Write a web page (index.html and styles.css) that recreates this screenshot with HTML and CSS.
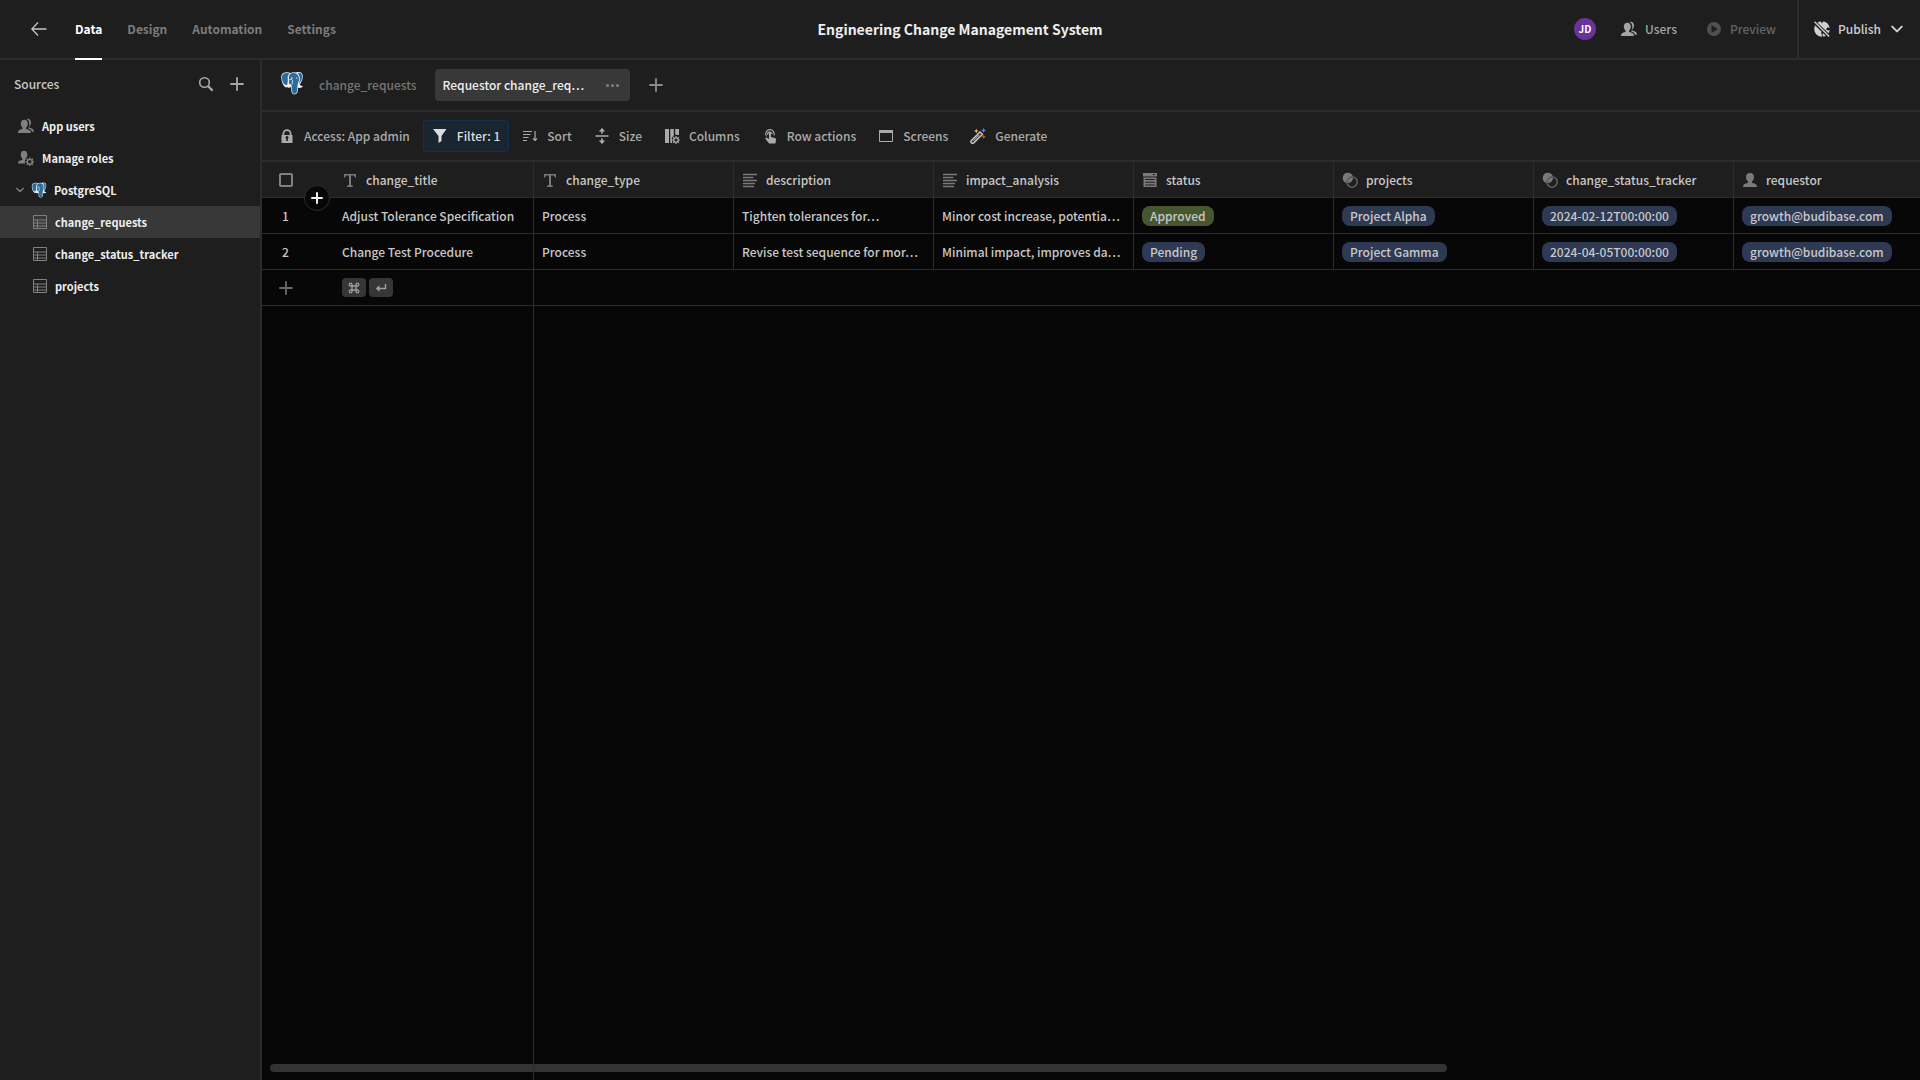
FILE: index.html
```
<!DOCTYPE html>
<html lang="en">
<head>
<meta charset="utf-8">
<title>Engineering Change Management System</title>
<link rel="stylesheet" href="styles.css">
</head>
<body>
<svg class="sprite" aria-hidden="true">
  <symbol id="i-back" viewBox="0 0 16 16"><path d="M15.500 8H1M7 1.500L.8 8L7 14.500" fill="none" stroke="currentColor" stroke-width="1.300"/></symbol>
  <symbol id="i-search" viewBox="0 0 16 16"><circle cx="6.500" cy="6.500" r="4.800" fill="none" stroke="currentColor" stroke-width="1.600"/><path d="M10 10l4.600 4.600" stroke="currentColor" stroke-width="2.200"/></symbol>
  <symbol id="i-plus" viewBox="0 0 16 16"><path d="M8 2v12M2 8h12" stroke="currentColor" stroke-width="1.800" stroke-linecap="round"/></symbol>
  <symbol id="i-plus-small" viewBox="0 0 16 16"><path d="M8 3v10M3 8h10" stroke="currentColor" stroke-width="2" stroke-linecap="round"/></symbol>
  <symbol id="i-user" viewBox="0 0 16 16"><path d="M1 15c0-2.800 1.700-3.500 4.600-4.100.6-.1.600-1.200.1-1.700C4.600 8.100 4 6.700 4 5c0-2.700 1.600-4 4-4s4 1.300 4 4c0 1.700-.6 3.100-1.700 4.200-.5.5-.5 1.600.1 1.700 2.900.6 4.600 1.300 4.600 4.100z" fill="currentColor"/></symbol>
  <symbol id="i-users" viewBox="0 0 16 16"><path d="M0 15c0-2.700 1.500-3.500 4.200-4 .6-.2.500-1.200 0-1.700C3.300 8.300 2.800 7 2.800 5.500 2.800 3 4.200 1.700 6.300 1.700S9.800 3 9.800 5.500c0 1.500-.5 2.800-1.400 3.800-.5.500-.6 1.500 0 1.700 2.700.5 4.600 1.300 4.600 4z" fill="currentColor"/><path d="M8.600 1.100c2.300-.9 4.400.8 4.400 3.300 0 1.700-.7 2.900-1.500 3.900-.4.500-.4 1.200.2 1.500 2.600.6 4.300 1.600 4.300 4h-1.900c-.4-1.900-1.700-2.900-3.900-3.400.7-1.200 1.100-2.900 1.100-4.900 0-1.900-.9-3.500-2.700-4.400z" fill="currentColor"/></symbol>
  <symbol id="i-roles" viewBox="0 0 16 16"><path d="M0 13.500c0-2.400 1.400-3.100 4.100-3.600.6-.2.500-1.100 0-1.600C3.200 7.300 2.700 6 2.700 4.600 2.700 2.300 4 .8 6 .8s3.300 1.500 3.300 3.800c0 1.400-.5 2.700-1.400 3.700-.3.400-.4.800-.3 1.200-.9 1.200-1 2.700-.4 4z" fill="currentColor"/><circle cx="11.800" cy="11.800" r="2.400" fill="none" stroke="currentColor" stroke-width="1.400"/><path d="M11.800 7.600v1.600M11.800 14.400V16M7.600 11.800h1.600M14.400 11.800H16M8.800 8.800l1.200 1.200M13.600 13.600l1.200 1.200M14.800 8.800l-1.200 1.200M10 13.600l-1.200 1.200" stroke="currentColor" stroke-width="1.400"/></symbol>
  <symbol id="i-chev" viewBox="0 0 10 10"><path d="M1 3l4 4 4-4" fill="none" stroke="currentColor" stroke-width="1.700" stroke-linecap="round" stroke-linejoin="round"/></symbol>
  <symbol id="i-pg" viewBox="0 0 24 24">
    <path d="M1.200 5.500C1.300 2.500 4 1 7.500 1.300c1 .1 1.800.3 2.700.7C12 1.200 14 1 16 1.400c3-1.200 6.500-.2 6.800 2.900.3 3-1 6.500-3 9.200.8 1.400 2 1.600 3.200 1.700-.9 1.600-3.300 2-5 1.500-.2 3.400-.2 6-2.900 6.600-2.700.5-3.600-1.300-3.800-3.700-.1-1.500-.1-2.500-.2-3.600-1.600 1.100-3.400.9-4.100.1C5 17.800 1 12 1.200 5.500z" fill="#e6eef3"/>
    <path d="M1.900 5.600c.1-2.700 2.500-3.900 5.500-3.600 1 .1 1.500.3 2 .5-2 1.700-1.800 4-1.600 6.200.1 2.400-.3 3.800-.9 5.300C4.300 14.800 1.700 10.500 1.900 5.600zM9.900 3.200C12 1.700 14.500 1.700 16.500 2.800c1.800 1.200 2.800 3.900 2.600 5.800-.3 2-1.200 3.500-1.500 5.500-.6 3.500.3 8-2.700 8.600-2.400.4-2.800-1.500-2.900-3.400-.1-2 .1-3.600-.7-5.200-.5-1-1.300-1.200-1.800-.8-.6-1-.5-1.800-.4-2.500.1-1.100 0-2-.1-3.200-.1-1.600-.1-3.200.9-4.400zM17.700 2.200c2.300-.5 4.300.2 4.500 2.400.2 2.500-.8 5.200-2.700 7.800-.4-.8 0-1.700.2-2.700.5-2.700.1-5.400-2-7.500z" fill="#2b6c98"/>
    <path d="M11 7.200c.8-.4 1.500-.3 2 .1M16 7.300c.6-.3 1-.3 1.500 0M9.500 8.500c2-.6 3.200.3 3 2-.1 1.200-.7 1.800-.3 3" stroke="#e6eef3" stroke-width=".9" fill="none"/>
  </symbol>
  <symbol id="i-table" viewBox="0 0 14 14"><path d="M.5.500h13v13H.500zM.5 5h13M.5 8h13M.5 11h13M4.500 5v8.500" fill="none" stroke="currentColor"/></symbol>
  <symbol id="i-play" viewBox="0 0 16 16"><path d="M8 1a7 7 0 1 0 0 14A7 7 0 0 0 8 1zM5.500 4.300l6.300 3.700-6.300 3.700z" fill="currentColor" fill-rule="evenodd"/></symbol>
  <symbol id="i-globe" viewBox="0 0 16 16"><circle cx="8" cy="8" r="7.800" fill="currentColor"/><path d="M6.500 0L8 2.500 9.200 0zM9 15.900l-.6-2.900 3.200-2-.4-2L9 8.600l-1.800 3 1 4.300zM16.200 7l-2.600-.8L12 8.400l1.800 1.200 2.300-.6z" fill="#1e1e1e"/><path d="M0 .8l15.400 15" stroke="#1e1e1e" stroke-width="3.600"/><path d="M.6.800l14.600 14.600" stroke="currentColor" stroke-width="1.400"/></symbol>
  <symbol id="i-lock" viewBox="0 0 16 16"><path d="M3.500 7V5.700a4.500 4.500 0 0 1 9 0V7h1v8h-11V7zM5.300 7h5.400V5.700a2.700 2.700 0 0 0-5.400 0zM7.200 13h1.600v-2.200a1.500 1.500 0 1 0-1.600 0z" fill="currentColor" fill-rule="evenodd"/></symbol>
  <symbol id="i-filter" viewBox="0 0 16 16"><path d="M1 1h13.500L9.500 8v5l-3 2V8z" fill="currentColor"/></symbol>
  <symbol id="i-sort" viewBox="0 0 16 16"><path d="M1 3.500h9M1 6.500h7.500M1 9.500h5.500M1 12.500h4M13 3v9.500M11 10.500l2 2 2-2" stroke="currentColor" stroke-width="1.200" fill="none"/></symbol>
  <symbol id="i-size" viewBox="0 0 16 16"><path d="M1.500 8h13M8 .8v4.700M8 10.500v4.700" stroke="currentColor" stroke-width="1.700"/><path d="M4.800 3.500L8 0l3.200 3.500zM4.800 12.500L8 16l3.200-3.500z" fill="currentColor"/></symbol>
  <symbol id="i-cols" viewBox="0 0 16 16"><path d="M1 1h4v14H1zM6.300 1h3.500v6.500l-2 2.500.4 5H6.300zM11.200 1h3.800v6l-3.800-.3z" fill="currentColor"/><circle cx="12" cy="12" r="2.200" fill="none" stroke="currentColor" stroke-width="1.300"/><path d="M12 8v1.600M12 14.400V16M8 12h1.600M14.400 12H16M9.200 9.200l1.100 1.100M13.700 13.700l1.100 1.100M14.800 9.200l-1.100 1.100M10.300 13.700l-1.100 1.100" stroke="currentColor" stroke-width="1.200"/></symbol>
  <symbol id="i-tap" viewBox="0 0 16 16"><path d="M4.500 8.500A4.300 4.300 0 1 1 12 7.500M5.600 6.700a2.300 2.300 0 1 1 4.600-.5" stroke="currentColor" stroke-width="1.200" fill="none"/><path d="M7 4.800c0-1.200 1.900-1.200 1.900 0V9l4 .9c.8.200 1.200.8 1.100 1.600L13.500 15.500H7.200C5.800 14 4.300 11.800 3 10.200c.7-.8 1.700-.7 2.500-.1L7 11z" fill="currentColor"/></symbol>
  <symbol id="i-screen" viewBox="0 0 16 16"><path d="M1.500 2.500h13v11h-13z" fill="none" stroke="currentColor"/><path d="M1 2h14v3H1z" fill="currentColor"/></symbol>
  <symbol id="i-wand" viewBox="0 0 16 16"><path d="M1.200 12.700L10 4l2.400 2.200-8.700 8.700c-1.500 1.200-3.800-.8-2.500-2.200z" fill="none" stroke="#c8c8c8" stroke-width="1.500"/><path d="M3.500 12.700l6-6" stroke="#c8c8c8"/><path d="M6.300.5l.7 1.800 1.800.7-1.800.7-.7 1.800-.7-1.800L3.800 3l1.800-.7z" fill="#d8b64a"/><path d="M13.600 0l.8 1.700 1.600.7-1.600.7-.8 1.700-.8-1.700-1.700-.7 1.700-.7z" fill="#6f86e8"/><path d="M13.700 6.500l.7 1.700 1.600.6-1.600.6-.7 1.700-.7-1.700-1.700-.6 1.700-.6z" fill="#e0503c"/></symbol>
  <symbol id="i-text" viewBox="0 0 16 16"><path d="M2 2h12v3.500h-1.200L12.300 3.500H9v9.700l1.800.3V15H5.200v-1.500L7 13.200V3.500H3.700L3.200 5.500H2z" fill="currentColor"/></symbol>
  <symbol id="i-lines" viewBox="0 0 16 16"><path d="M1 2.500h14M1 5.500h10.500M1 8.500h14M1 11.500h12M1 14.500h11" stroke="currentColor" stroke-width="1.500"/></symbol>
  <symbol id="i-options" viewBox="0 0 16 16"><path d="M1 1h14v3.500H1zM1.500 5.500h13V15h-13zM10.500 2l1.500 1.500L13.500 2zM3.200 7v1h9.600V7zM3.200 9.700v1h9.600v-1zM3.200 12.400v1h9.600v-1z" fill="currentColor" fill-rule="evenodd"/></symbol>
  <symbol id="i-link" viewBox="0 0 16 16"><circle cx="10" cy="10" r="5.200" fill="none" stroke="currentColor" stroke-width="1.100"/><path d="M6 .8a5.200 5.200 0 0 1 4.800 3.400A6.200 6.200 0 0 0 4.200 10.900 5.200 5.200 0 0 1 6 .8z" fill="currentColor"/><path d="M11 5.500a5.200 5.200 0 0 1-5.500 5.500A4.900 4.900 0 0 1 11 5.500z" fill="currentColor"/></symbol>
  <symbol id="i-cmd" viewBox="0 0 12 12"><path d="M4 4V2.700A1.400 1.400 0 1 0 2.700 4h6.600A1.400 1.400 0 1 0 8 2.700v6.600A1.400 1.400 0 1 0 9.300 8H2.700A1.400 1.400 0 1 0 4 9.300z" fill="none" stroke="currentColor" stroke-width="1.300"/></symbol>
  <symbol id="i-return" viewBox="0 0 12 12"><path d="M10.500 2v4.500H2" fill="none" stroke="currentColor" stroke-width="1.400"/><path d="M4.500 3.300v6.400L.8 6.500z" fill="currentColor"/></symbol>
</svg>

<div class="app">
  <header class="topbar">
    <a class="back" href="#" aria-label="Back"><svg class="ico"><use href="#i-back"/></svg></a>
    <nav class="topnav">
      <a class="topnav-link is-active" href="#">Data</a>
      <a class="topnav-link" href="#">Design</a>
      <a class="topnav-link" href="#">Automation</a>
      <a class="topnav-link" href="#">Settings</a>
    </nav>
    <h1 class="app-title">Engineering Change Management System</h1>
    <div class="actions">
      <span class="avatar">JD</span>
      <button class="action"><svg class="ico"><use href="#i-users"/></svg>Users</button>
      <button class="action preview" disabled><svg class="ico"><use href="#i-play"/></svg>Preview</button>
      <button class="action publish"><svg class="ico"><use href="#i-globe"/></svg>Publish<svg class="ico chevron"><use href="#i-chev"/></svg></button>
    </div>
  </header>

  <aside class="sidebar">
    <div class="sidebar-head">
      <h2 class="sidebar-title">Sources</h2>
      <button class="icon-btn" aria-label="Search"><svg class="ico"><use href="#i-search"/></svg></button>
      <button class="icon-btn" aria-label="Add source"><svg class="ico"><use href="#i-plus"/></svg></button>
    </div>
    <nav class="sources">
      <a class="source" href="#"><svg class="ico"><use href="#i-users"/></svg>App users</a>
      <a class="source" href="#"><svg class="ico"><use href="#i-roles"/></svg>Manage roles</a>
      <a class="source source-db" href="#"><svg class="ico twisty"><use href="#i-chev"/></svg><svg class="ico pg-small"><use href="#i-pg"/></svg>PostgreSQL</a>
      <a class="source source-table is-selected" href="#"><svg class="ico"><use href="#i-table"/></svg>change_requests</a>
      <a class="source source-table" href="#"><svg class="ico"><use href="#i-table"/></svg>change_status_tracker</a>
      <a class="source source-table" href="#"><svg class="ico"><use href="#i-table"/></svg>projects</a>
    </nav>
  </aside>

  <main class="content">
    <div class="tabs">
      <svg class="pg-logo"><use href="#i-pg"/></svg>
      <a class="tab" href="#">change_requests</a>
      <div class="tab is-active">
        <a class="tab-label" href="#">Requestor change_req…</a>
        <button class="more" aria-label="View options"><i></i><i></i><i></i></button>
      </div>
      <button class="icon-btn add-view" aria-label="Add view"><svg class="ico"><use href="#i-plus"/></svg></button>
    </div>

    <div class="toolbar">
      <button class="tool"><svg class="ico"><use href="#i-lock"/></svg>Access: App admin</button>
      <button class="tool is-on"><svg class="ico"><use href="#i-filter"/></svg>Filter: 1</button>
      <button class="tool"><svg class="ico"><use href="#i-sort"/></svg>Sort</button>
      <button class="tool"><svg class="ico"><use href="#i-size"/></svg>Size</button>
      <button class="tool"><svg class="ico"><use href="#i-cols"/></svg>Columns</button>
      <button class="tool"><svg class="ico"><use href="#i-tap"/></svg>Row actions</button>
      <button class="tool"><svg class="ico"><use href="#i-screen"/></svg>Screens</button>
      <button class="tool"><svg class="ico"><use href="#i-wand"/></svg>Generate</button>
    </div>

    <div class="grid">
      <table class="table">
        <colgroup>
          <col class="col-num"><col class="col"><col class="col"><col class="col"><col class="col"><col class="col"><col class="col"><col class="col"><col class="col">
        </colgroup>
        <thead>
          <tr>
            <th class="num"><input class="check" type="checkbox" aria-label="Select all rows"></th>
            <th><span class="head"><svg class="ico"><use href="#i-text"/></svg>change_title</span></th>
            <th><span class="head"><svg class="ico"><use href="#i-text"/></svg>change_type</span></th>
            <th><span class="head"><svg class="ico"><use href="#i-lines"/></svg>description</span></th>
            <th><span class="head"><svg class="ico"><use href="#i-lines"/></svg>impact_analysis</span></th>
            <th><span class="head"><svg class="ico"><use href="#i-options"/></svg>status</span></th>
            <th><span class="head"><svg class="ico"><use href="#i-link"/></svg>projects</span></th>
            <th><span class="head"><svg class="ico"><use href="#i-link"/></svg>change_status_tracker</span></th>
            <th><span class="head"><svg class="ico"><use href="#i-user"/></svg>requestor</span></th>
          </tr>
        </thead>
        <tbody>
          <tr>
            <td class="num">1</td>
            <td>Adjust Tolerance Specification</td>
            <td>Process</td>
            <td>Tighten tolerances for…</td>
            <td>Minor cost increase, potentia…</td>
            <td><span class="chip chip-green">Approved</span></td>
            <td><span class="chip">Project Alpha</span></td>
            <td><span class="chip">2024-02-12T00:00:00</span></td>
            <td><span class="chip">growth@budibase.com</span></td>
          </tr>
          <tr>
            <td class="num">2</td>
            <td>Change Test Procedure</td>
            <td>Process</td>
            <td>Revise test sequence for mor…</td>
            <td>Minimal impact, improves da…</td>
            <td><span class="chip">Pending</span></td>
            <td><span class="chip">Project Gamma</span></td>
            <td><span class="chip">2024-04-05T00:00:00</span></td>
            <td><span class="chip">growth@budibase.com</span></td>
          </tr>
          <tr class="new-row">
            <td class="num"><button class="icon-btn add-row" aria-label="Add row"><svg class="ico"><use href="#i-plus"/></svg></button></td>
            <td><span class="keys"><kbd><svg class="key-ico" role="img" aria-label="Command"><use href="#i-cmd"/></svg></kbd><kbd><svg class="key-ico" role="img" aria-label="Enter"><use href="#i-return"/></svg></kbd></span></td>
            <td colspan="7"></td>
          </tr>
        </tbody>
      </table>
      <div class="grid-rest"></div>
      <div class="scrollbar"></div>
      <button class="insert" aria-label="Insert row"><svg class="ico"><use href="#i-plus-small"/></svg></button>
    </div>
  </main>
</div>
</body>
</html>
```
FILE: styles.css
```
* { box-sizing: border-box; }

body {
  margin: 0;
  background: #1e1e1e;
  color: #c8c8c8;
  font: 500 12px/20px "Noto Sans CJK KR", "Noto Sans", sans-serif;
}

a { color: inherit; text-decoration: none; }
h1, h2 { margin: 0; }
button {
  display: flex;
  align-items: center;
  margin: 0;
  padding: 0;
  border: 0;
  background: none;
  color: inherit;
  font: inherit;
}

.sprite { position: absolute; width: 0; height: 0; }
.ico { display: block; flex: none; width: 16px; height: 16px; }

.app {
  display: grid;
  grid-template: 60px 1fr / 262px minmax(0, 1fr);
  height: 100vh;
}

/* Top bar */
.topbar {
  grid-column: 1 / -1;
  display: grid;
  grid-template: 60px / 75px 1fr auto 1fr 75px;
  border-bottom: 2px solid #2c2c2c;
}
.back { display: flex; align-items: center; height: 58px; padding-left: 31px; }
.topnav { display: flex; gap: 25px; }
.topnav-link { height: 60px; line-height: 58px; color: #7c7c7c; font-weight: 700; }
.topnav-link.is-active { color: #fff; border-bottom: 2px solid #fff; }
.app-title { font-size: 14px; line-height: 58px; color: #eee; }
.actions { grid-column: 4 / -1; display: flex; align-items: center; justify-content: flex-end; height: 58px; }
.avatar {
  width: 22px;
  height: 22px;
  margin-right: 25px;
  border-radius: 50%;
  background: #68349a;
  color: #fff;
  font-size: 10px;
  font-weight: 700;
  line-height: 22px;
  text-align: center;
}
.action { gap: 8px; color: #a4a4a4; }
.preview { margin-left: 29px; color: #646464; }
.preview .ico { color: #505050; }
.publish {
  align-self: stretch;
  margin-left: 21px;
  padding: 0 17px 0 15px;
  border-left: 2px solid #2c2c2c;
  color: #d0d0d0;
}
.chevron { width: 12px; height: 12px; margin-left: 2px; }

/* Sidebar */
.sidebar { border-right: 2px solid #2c2c2c; }
.sidebar-head { display: flex; align-items: center; gap: 15px; height: 50px; padding: 0 15px 2px 14px; }
.sidebar-title { flex: 1; font-size: 12px; font-weight: 500; }
.icon-btn { color: #a8a8a8; }
.source {
  display: flex;
  align-items: center;
  gap: 8px;
  height: 32px;
  padding-left: 18px;
  color: #eee;
  font-size: 11px;
  font-weight: 700;
}
.source .ico { color: #808080; }
.source-db { gap: 7px; padding-left: 16px; }
.source .twisty { width: 8px; height: 8px; }
.source-table { padding-left: 33px; }
.source-table .ico { width: 14px; height: 14px; }
.source.is-selected { background: #383838; }

/* View tabs */
.content { display: flex; flex-direction: column; min-width: 0; }
.tabs { display: flex; align-items: center; height: 52px; padding-left: 18px; border-bottom: 2px solid #2c2c2c; }
.pg-logo { width: 24px; height: 24px; margin-right: 7px; margin-bottom: 4px; }
.tab { display: flex; align-items: center; height: 32px; padding: 0 8px; color: #747474; }
.tab.is-active {
  justify-content: space-between;
  width: 195px;
  margin: 0 18px 0 10px;
  padding-right: 11px;
  border-radius: 4px;
  background: #383838;
  color: #eee;
}
.more { gap: 2px; }
.more i { width: 3px; height: 3px; border-radius: 50%; background: #808080; }
.add-view { color: #8c8c8c; }

/* Toolbar */
.toolbar { display: flex; align-items: center; gap: 4px; height: 50px; padding-left: 8px; border-bottom: 2px solid #2c2c2c; }
.tool { gap: 9px; height: 32px; padding: 0 9px; border-radius: 4px; color: #aaa; }
.tool.is-on { background: #192531; box-shadow: inset 0 0 0 1px #14304e; color: #ddd; }

/* Data grid */
.grid { position: relative; flex: 1; display: flex; flex-direction: column; overflow: hidden; background: #070707; }
.table { width: 1672px; table-layout: fixed; border-collapse: separate; border-spacing: 0; }
.col-num { width: 72px; }
.col { width: 200px; }
th, td {
  height: 36px;
  padding: 0 8px;
  border-right: 1px solid #2c2c2c;
  border-bottom: 1px solid #2c2c2c;
  overflow: hidden;
  font-weight: 500;
  text-align: left;
  white-space: nowrap;
}
th { background: #1e1e1e; }
.num { padding: 0 25px 0 0; border-right: 0; text-align: center; }
.head { display: flex; align-items: center; gap: 8px; }
.head .ico { color: #7a7a7a; }
.check {
  appearance: none;
  display: block;
  width: 14px;
  height: 14px;
  margin: 0 auto;
  border: 2px solid #808080;
  border-radius: 2px;
}
.chip {
  display: block;
  width: fit-content;
  height: 20px;
  padding: 0 8px;
  border-radius: 8px;
  background: #2e3a54;
}
.chip-green { background: #465730; }
.add-row { margin: 0 auto; color: #6a6a6a; }
.keys { display: flex; gap: 3px; }
kbd {
  display: flex;
  align-items: center;
  justify-content: center;
  width: 24px;
  height: 19px;
  border-radius: 4px;
  background: #363636;
  color: #a0a0a0;
}
.key-ico { width: 12px; height: 12px; }
.grid-rest { position: relative; z-index: 1; flex: 1; width: 272px; border-right: 1px solid #2c2c2c; }
.scrollbar {
  position: absolute;
  left: 8px;
  bottom: 8px;
  width: 71%;
  height: 8px;
  border-radius: 4px;
  background: #333;
}
.insert {
  position: absolute;
  z-index: 2;
  left: 42px;
  top: 23px;
  justify-content: center;
  width: 26px;
  height: 26px;
  border: 1px solid #2c2c2c;
  border-radius: 50%;
  background: #070707;
  color: #eee;
}
```
